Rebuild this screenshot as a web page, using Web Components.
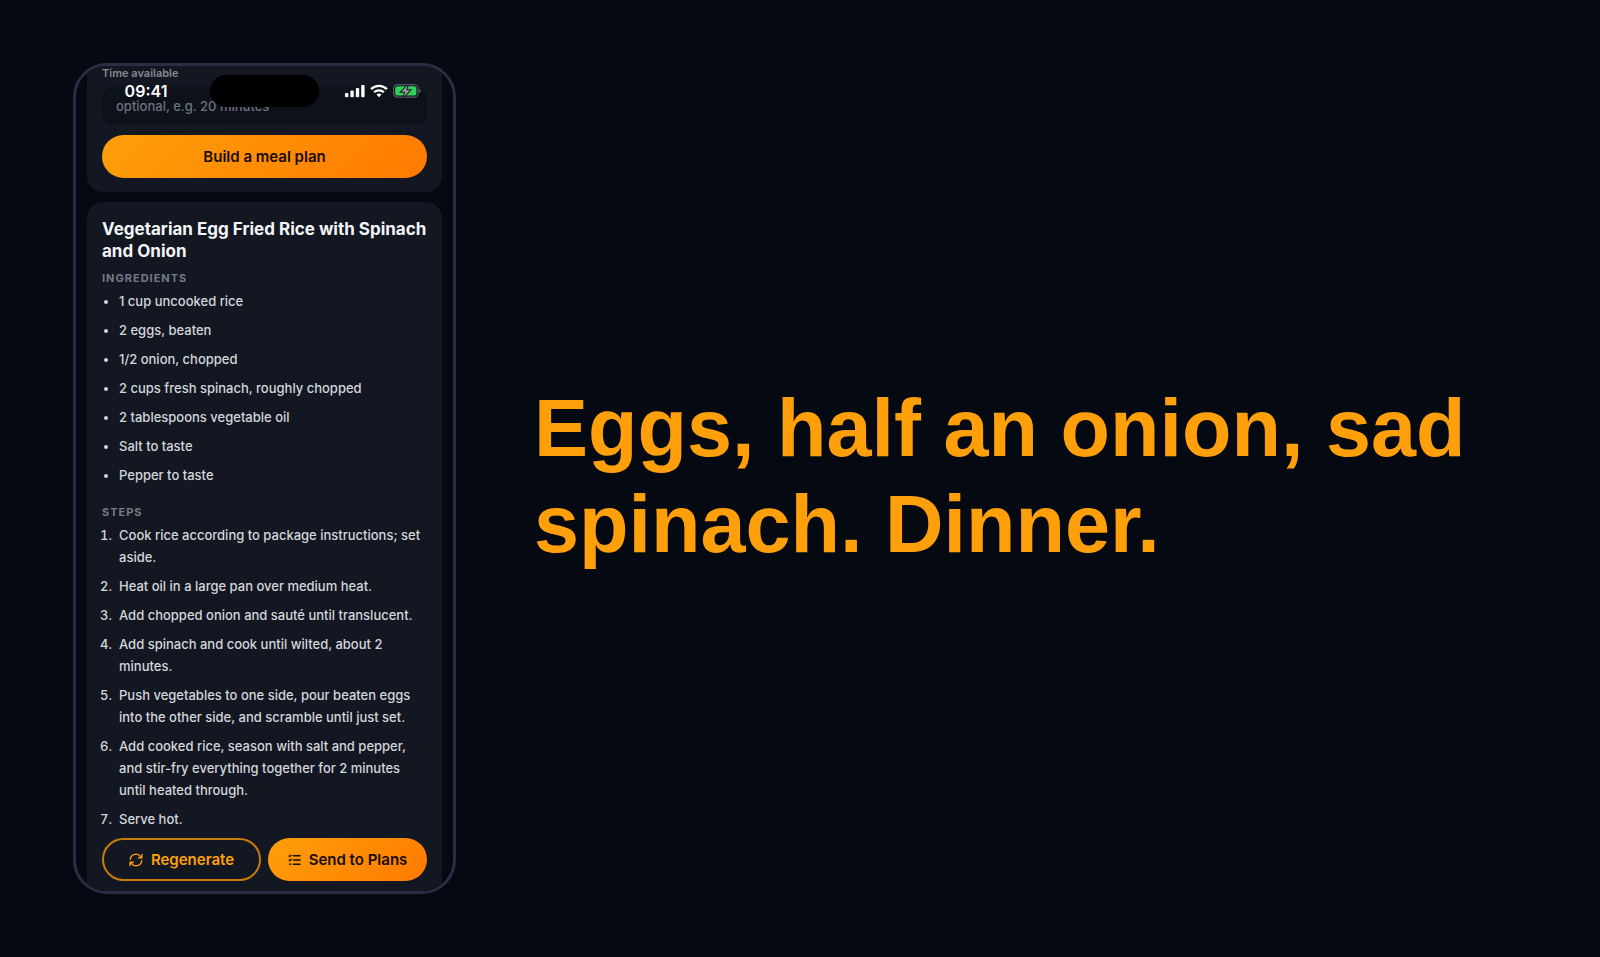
<!DOCTYPE html>
<html lang="en">
<head>
<meta charset="utf-8">
<meta name="viewport" content="width=device-width, initial-scale=1">
<title>Meal plan</title>
<style>
@counter-style step {
    system: extends decimal;
    suffix: ".\00a0\00a0";
}
body {
    margin: 0;
    background: #050a12;
    font-family: Inter, "Liberation Sans", sans-serif;
}
ol {
    list-style-type: step;
}
</style>
</head>
<body>
<promo-slide>
    <phone-frame slot="device">
        <status-bar slot="status" time="09:41"></status-bar>
        <plan-form></plan-form>
        <recipe-card>
            <span slot="title">Vegetarian Egg Fried Rice with Spinach and Onion</span>
            <recipe-list slot="ingredients" heading="Ingredients">
                <ul>
                    <li>1 cup uncooked rice</li>
                    <li>2 eggs, beaten</li>
                    <li>1/2 onion, chopped</li>
                    <li>2 cups fresh spinach, roughly chopped</li>
                    <li>2 tablespoons vegetable oil</li>
                    <li>Salt to taste</li>
                    <li>Pepper to taste</li>
                </ul>
            </recipe-list>
            <recipe-list slot="steps" heading="Steps">
                <ol>
                    <li>Cook rice according to package instructions; set aside.</li>
                    <li>Heat oil in a large pan over medium heat.</li>
                    <li>Add chopped onion and sauté until translucent.</li>
                    <li>Add spinach and cook until wilted, about 2 minutes.</li>
                    <li>Push vegetables to one side, pour beaten eggs into the other side, and scramble until just set.</li>
                    <li>Add cooked rice, season with salt and pepper, and stir-fry everything together for 2 minutes until heated through.</li>
                    <li>Serve hot.</li>
                </ol>
            </recipe-list>
            <pill-button slot="actions" variant="outline">
                <svg slot="icon" width="14" height="14" viewBox="0 0 14 14" fill="none" stroke="currentColor" stroke-width="1.4" stroke-linecap="round" stroke-linejoin="round">
                    <path d="M1.3 6.2A5.6 5.6 0 0 1 11.5 3.6L12.6 4.8M12.9 1.4V4.9H9.4"/>
                    <path d="M12.7 7.8A5.6 5.6 0 0 1 2.5 10.4L1.4 9.2M1.1 12.6V9.1H4.6"/>
                </svg>
                Regenerate
            </pill-button>
            <pill-button slot="actions">
                <svg slot="icon" width="13" height="14" viewBox="0 0 13 14" fill="none" stroke="currentColor" stroke-width="1.6" stroke-linecap="round" stroke-linejoin="round">
                    <path d="M5.4 2.8H12M5.4 7H12M5.4 11.2H12"/>
                    <path d="M1 2.9L1.8 3.6L3.2 2.1M1 7.1L1.8 7.8L3.2 6.3M1.5 11.2H2.8" stroke-width="1.3"/>
                </svg>
                Send to Plans
            </pill-button>
        </recipe-card>
    </phone-frame>
    Eggs, half an onion, sad spinach. Dinner.
</promo-slide>

<script>
class BaseElement extends HTMLElement {
    constructor() {
        super();
        const template = document.createElement('template');
        template.innerHTML = this.constructor.markup;
        this.attachShadow({mode: 'open'})
            .appendChild(template.content.cloneNode(true));
    }
}

class PromoSlide extends BaseElement {
    static markup = `
<style>
:host {
    display: block;
}
main {
    display: flex;
    align-items: center;
    gap: 78px;
    min-height: 100vh;
    box-sizing: border-box;
    padding: 32px 73px;
}
h1 {
    flex: 1;
    min-width: 0;
    margin: 0;
    padding-bottom: 6px;
    color: #ff9f0a;
    font: bold 81px/96px "Liberation Sans", Arial, sans-serif;
}
</style>
<main>
    <slot name="device"></slot>
    <h1><slot></slot></h1>
</main>`;
}

class PhoneFrame extends BaseElement {
    static markup = `
<style>
:host {
    display: block;
    flex: 0 1 383px;
    min-width: 0;
    box-sizing: border-box;
    position: relative;
    overflow: hidden;
    border: 3px solid #2b2d44;
    border-radius: 34px;
    background: #050911;
}
.screen {
    display: flex;
    flex-direction: column;
    gap: 10px;
    padding: 0 11px;
}
.status {
    position: absolute;
    inset: 9px 0 auto;
}
</style>
<div class="screen"><slot></slot></div>
<div class="status"><slot name="status"></slot></div>`;
}

class StatusBar extends BaseElement {
    static markup = `
<style>
:host {
    display: block;
}
.bar {
    display: grid;
    grid-template-columns: 1fr 109px 1fr;
    align-items: center;
    color: #fff;
}
time {
    justify-self: center;
    padding-left: 6px;
    font-size: 16px;
    font-weight: 600;
    line-height: 20px;
}
.island {
    height: 32px;
    border-radius: 16px;
    background: #000;
}
.icons {
    display: flex;
    align-items: center;
    justify-content: flex-end;
    gap: 5px;
    padding-right: 32px;
}
svg {
    display: block;
}
</style>
<div class="bar">
    <time></time>
    <span class="island"></span>
    <span class="icons">
        <svg width="20" height="14" viewBox="0 0 20 14" fill="currentColor">
            <rect x="0" y="9" width="3.4" height="4.2" rx="1"/>
            <rect x="5.4" y="6.6" width="3.4" height="6.6" rx="1"/>
            <rect x="10.8" y="4" width="3.4" height="9.2" rx="1"/>
            <rect x="16.2" y="1" width="3.4" height="12.2" rx="1"/>
        </svg>
        <svg width="18" height="14" viewBox="0 0 18 14" fill="none" stroke="currentColor" stroke-width="2.3">
            <path d="M1.1 5.1A11.2 11.2 0 0 1 16.9 5.1"/>
            <path d="M4.1 8.3A7 7 0 0 1 13.9 8.3"/>
            <path d="M9 13.2L6.5 10.6A3.6 3.6 0 0 1 11.5 10.6Z" fill="currentColor" stroke="none"/>
        </svg>
        <svg width="28" height="14" viewBox="0 0 28 14">
            <rect x=".6" y=".6" width="24.4" height="12.6" rx="4" fill="none" stroke="#575b63" stroke-width="1.2"/>
            <path d="M26 4.8Q27.8 5.4 27.8 7T26 9.2Z" fill="#575b63"/>
            <rect x="2.2" y="2.2" width="21.2" height="9.4" rx="2.6" fill="#30d158"/>
            <path d="M14.6 1.2L8.4 7.7H12.2L10.8 12.8L17 6.2H13.2Z" fill="#969ca0" stroke="#131722" stroke-width="2" paint-order="stroke"/>
        </svg>
    </span>
</div>`;

    connectedCallback() {
        this.shadowRoot.querySelector('time').textContent = this.getAttribute('time');
    }
}

class PillButton extends BaseElement {
    static markup = `
<style>
:host {
    display: block;
    flex: 1;
}
button {
    display: flex;
    align-items: center;
    justify-content: center;
    gap: 8px;
    width: 100%;
    height: 43px;
    box-sizing: border-box;
    padding: 0;
    border: 0;
    border-radius: 22px;
    background: linear-gradient(135deg, #ff9f0a, #ff7a00);
    color: #160c04;
    font: 600 15px/20px Inter, "Liberation Sans", sans-serif;
    white-space: nowrap;
    cursor: pointer;
}
:host([variant="outline"]) button {
    border: 2px solid #c97c0e;
    background: transparent;
    color: #ff9f0a;
}
</style>
<button type="button"><slot name="icon"></slot><span><slot></slot></span></button>`;
}

class PlanForm extends BaseElement {
    static markup = `
<style>
:host {
    display: block;
}
form {
    display: flex;
    flex-direction: column;
    padding: 0 15px 14px;
    border-radius: 0 0 16px 16px;
    background: #131722;
}
label {
    color: #848993;
    font-size: 11px;
    font-weight: 600;
    line-height: 14px;
}
input {
    height: 38px;
    box-sizing: border-box;
    margin: 7px 0 10px;
    padding: 0 14px;
    border: 0;
    border-radius: 12px;
    background: #0c111a;
    color: #e5e7eb;
    font: 500 13px/20px Inter, "Liberation Sans", sans-serif;
}
input::placeholder {
    color: #6d727d;
}
</style>
<form>
    <label for="time">Time available</label>
    <input id="time" type="text" placeholder="optional, e.g. 20 minutes">
    <pill-button>Build a meal plan</pill-button>
</form>`;
}

class RecipeCard extends BaseElement {
    static markup = `
<style>
:host {
    display: block;
}
article {
    padding: 16px 15px 10px;
    border-radius: 16px 16px 0 0;
    background: #131722;
}
h2 {
    margin: 0 0 8px;
    color: #f4f5f7;
    font-size: 17px;
    font-weight: 700;
    line-height: 22px;
}
.sections {
    display: flex;
    flex-direction: column;
    gap: 18px;
}
.actions {
    display: flex;
    gap: 7px;
    margin-top: 8px;
}
</style>
<article>
    <h2><slot name="title"></slot></h2>
    <div class="sections">
        <slot name="ingredients"></slot>
        <slot name="steps"></slot>
    </div>
    <div class="actions"><slot name="actions"></slot></div>
</article>`;
}

class RecipeList extends BaseElement {
    static markup = `
<style>
:host {
    display: block;
}
h3 {
    margin: 0 0 4px;
    color: #747a86;
    font-size: 11px;
    font-weight: 700;
    line-height: 16px;
    letter-spacing: 1px;
    text-transform: uppercase;
}
::slotted(ul),
::slotted(ol) {
    display: flex;
    flex-direction: column;
    gap: 7px;
    margin: 0;
    padding: 0 0 0 17px;
    color: #d3d6db;
    font-size: 13px;
    font-weight: 500;
    line-height: 22px;
}
</style>
<h3></h3>
<slot></slot>`;

    connectedCallback() {
        this.shadowRoot.querySelector('h3').textContent = this.getAttribute('heading');
    }
}

customElements.define('promo-slide', PromoSlide);
customElements.define('phone-frame', PhoneFrame);
customElements.define('status-bar', StatusBar);
customElements.define('pill-button', PillButton);
customElements.define('plan-form', PlanForm);
customElements.define('recipe-card', RecipeCard);
customElements.define('recipe-list', RecipeList);
</script>
</body>
</html>
